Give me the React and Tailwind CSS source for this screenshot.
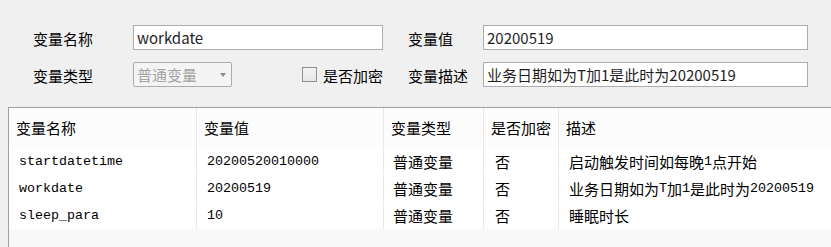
import React from 'react';

const cjk = { fontFamily: '"Noto Sans CJK SC", "Noto Sans", sans-serif' };

const rows = [
    { name: 'startdatetime', value: '20200520010000', type: '普通变量', enc: '否', desc: '启动触发时间如每晚1点开始' },
    { name: 'workdate', value: '20200519', type: '普通变量', enc: '否', desc: '业务日期如为T加1是此时为20200519' },
    { name: 'sleep_para', value: '10', type: '普通变量', enc: '否', desc: '睡眠时长' },
];

// ascii runs in a mono face, CJK runs in Noto, like the grid's bitmap font
const Mixed = ({ text }) => {
    const parts = text.match(/[\x00-\x7f]+|[^\x00-\x7f]+/g) || [];
    return parts.map((p, i) =>
        /^[\x00-\x7f]/.test(p) ? (
            <span key={i} className="font-['Liberation_Mono',monospace] text-[13.33px]">{p}</span>
        ) : (
            <span key={i} className="font-['Noto_Sans_CJK_SC',sans-serif] text-[15px]">{p}</span>
        )
    );
};

const Label = ({ children, className = '' }) => (
    <div className={`text-[15px] text-black leading-none pt-[2px] ${className}`} style={cjk}>{children}</div>
);

const TextBox = ({ value, className = '' }) => (
    <div className={`h-[25px] border border-[#acacac] bg-white flex items-center pl-[3px] pt-[2px] text-[15px] text-[#1f1f1f] ${className}`} style={cjk}>
        {value}
    </div>
);

const cols = ['w-[188px]', 'w-[187px]', 'w-[100px]', 'w-[75px]', 'flex-1'];

const App = () => {
    return (
        <div className="w-[831px] h-[247px] bg-[#f0f0f0] flex flex-col overflow-hidden">
            {/* form */}
            <div className="pt-[25px] flex flex-col gap-[12px]">
                <div className="flex items-center">
                    <Label className="ml-[33px] w-[100px]">变量名称</Label>
                    <TextBox value="workdate" className="w-[250px]" />
                    <Label className="ml-[25px] w-[75px]">变量值</Label>
                    <TextBox value="20200519" className="w-[325px]" />
                </div>
                <div className="flex items-center">
                    <Label className="ml-[33px] w-[100px]">变量类型</Label>
                    <div className="w-[99px] h-[25px] border border-[#acacac] rounded-[2px] bg-[#f4f4f4] flex items-center justify-between pl-[3px] pr-[5px]">
                        <span className="text-[15px] text-[#a3a3a3] pt-[2px]" style={cjk}>普通变量</span>
                        <span className="w-0 h-0 border-l-[3.5px] border-r-[3.5px] border-t-[4px] border-l-transparent border-r-transparent border-t-[#8a8a8a]" />
                    </div>
                    <div className="ml-[70px] w-[15px] h-[15px] border border-[#8e8f8f] bg-gradient-to-b from-[#f2f2f2] to-[#e6e6e6]" />
                    <Label className="ml-[6px] w-[60px]">是否加密</Label>
                    <Label className="ml-[25px] w-[75px]">变量描述</Label>
                    <TextBox value="业务日期如为T加1是此时为20200519" className="w-[325px]" />
                </div>
            </div>

            {/* grid */}
            <div className="mt-[20px] ml-[8px] flex-1 border-l border-t border-[#a0a0a0] bg-[#f8f8f8] flex flex-col">
                <div className="h-[40px] bg-[#fcfcfc] flex text-black text-[15px]" style={cjk}>
                    {['变量名称', '变量值', '变量类型', '是否加密', '描述'].map((h, i) => (
                        <div key={h} className={`${cols[i]} flex items-center pl-[7px] ${i < 4 ? 'border-r border-[#e8e8e8]' : ''}`}>
                            {h}
                        </div>
                    ))}
                </div>
                <div className="bg-white flex flex-col gap-[1px] pt-[1px] text-black">
                    {rows.map((r) => (
                        <div key={r.name} className="h-[26px] flex">
                            <div className={`${cols[0]} flex items-center pl-[10px] border-r border-[#e8e8e8]`}><Mixed text={r.name} /></div>
                            <div className={`${cols[1]} flex items-center pl-[10px] border-r border-[#e8e8e8]`}><Mixed text={r.value} /></div>
                            <div className={`${cols[2]} flex items-center pl-[9px] border-r border-[#e8e8e8]`}><Mixed text={r.type} /></div>
                            <div className={`${cols[3]} flex items-center pl-[11px] border-r border-[#e8e8e8]`}><Mixed text={r.enc} /></div>
                            <div className={`${cols[4]} flex items-center pl-[10px]`}><Mixed text={r.desc} /></div>
                        </div>
                    ))}
                </div>
            </div>
        </div>
    );
};

export default App;
